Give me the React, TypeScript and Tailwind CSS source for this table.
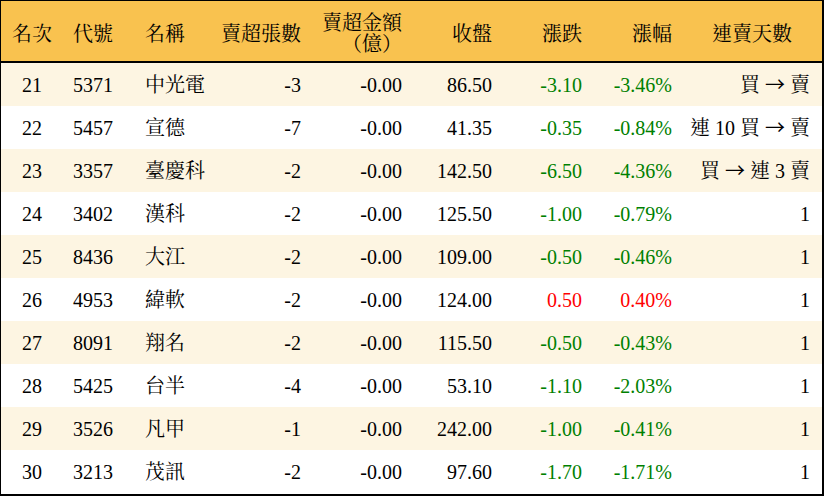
import React from "react";

type Row = {
  rank: string;
  code: string;
  name: string;
  qty: string;
  amt: string;
  close: string;
  chg: string;
  pct: string;
  days: string;
};

const rows: Row[] = [
  { rank: "21", code: "5371", name: "中光電", qty: "-3", amt: "-0.00", close: "86.50", chg: "-3.10", pct: "-3.46%", days: "買 → 賣" },
  { rank: "22", code: "5457", name: "宣德", qty: "-7", amt: "-0.00", close: "41.35", chg: "-0.35", pct: "-0.84%", days: "連 10 買 → 賣" },
  { rank: "23", code: "3357", name: "臺慶科", qty: "-2", amt: "-0.00", close: "142.50", chg: "-6.50", pct: "-4.36%", days: "買 → 連 3 賣" },
  { rank: "24", code: "3402", name: "漢科", qty: "-2", amt: "-0.00", close: "125.50", chg: "-1.00", pct: "-0.79%", days: "1" },
  { rank: "25", code: "8436", name: "大江", qty: "-2", amt: "-0.00", close: "109.00", chg: "-0.50", pct: "-0.46%", days: "1" },
  { rank: "26", code: "4953", name: "緯軟", qty: "-2", amt: "-0.00", close: "124.00", chg: "0.50", pct: "0.40%", days: "1" },
  { rank: "27", code: "8091", name: "翔名", qty: "-2", amt: "-0.00", close: "115.50", chg: "-0.50", pct: "-0.43%", days: "1" },
  { rank: "28", code: "5425", name: "台半", qty: "-4", amt: "-0.00", close: "53.10", chg: "-1.10", pct: "-2.03%", days: "1" },
  { rank: "29", code: "3526", name: "凡甲", qty: "-1", amt: "-0.00", close: "242.00", chg: "-1.00", pct: "-0.41%", days: "1" },
  { rank: "30", code: "3213", name: "茂訊", qty: "-2", amt: "-0.00", close: "97.60", chg: "-1.70", pct: "-1.71%", days: "1" },
];

const grid =
  "grid grid-cols-[62px_72px_80px_96px_101px_90px_90px_90px_140px] items-center";

function Days({ text }: { text: string }) {
  const parts = text.split("→");
  if (parts.length === 1) return <>{text}</>;
  return (
    <>
      {parts[0]}
      <span style={{ fontFamily: '"Noto Sans CJK TC", sans-serif' }}>→</span>
      {parts[1]}
    </>
  );
}

export default function App() {
  return (
    <div
      className="w-[824px] h-[496px] bg-white border-l border-t border-r-2 border-b-2 border-black overflow-hidden text-[20px] text-black"
      style={{
        fontFamily:
          '"Liberation Serif", "Noto Serif CJK TC", "Noto Sans CJK TC", serif',
      }}
    >
      <div className={`${grid} h-[62px] pt-[6px] bg-[#f9c24f] border-b-2 border-black leading-[21px]`}>
        <div className="text-center">名次</div>
        <div className="pl-[10px]">代號</div>
        <div className="pl-[10px]">名稱</div>
        <div className="text-right pr-[10px]">賣超張數</div>
        <div className="text-right pr-[10px]">
          賣超金額
          <br />
          （億）
        </div>
        <div className="text-right pr-[10px]">收盤</div>
        <div className="text-right pr-[10px]">漲跌</div>
        <div className="text-right pr-[10px]">漲幅</div>
        <div className="text-center">連賣天數</div>
      </div>
      {rows.map((r, i) => {
        const up = !r.chg.startsWith("-");
        const color = up ? "text-[#ff0000]" : "text-[#008000]";
        return (
          <div
            key={r.rank}
            className={`${grid} h-[43px] ${i % 2 === 0 ? "bg-[#fdf5e2]" : "bg-white"}`}
          >
            <div className="text-center">{r.rank}</div>
            <div className="pl-[10px]">{r.code}</div>
            <div className="pl-[10px]">{r.name}</div>
            <div className="text-right pr-[10px]">{r.qty}</div>
            <div className="text-right pr-[10px]">{r.amt}</div>
            <div className="text-right pr-[10px]">{r.close}</div>
            <div className={`text-right pr-[10px] ${color}`}>{r.chg}</div>
            <div className={`text-right pr-[10px] ${color}`}>{r.pct}</div>
            <div className="text-right pr-[12px] whitespace-pre">
              <Days text={r.days} />
            </div>
          </div>
        );
      })}
    </div>
  );
}
